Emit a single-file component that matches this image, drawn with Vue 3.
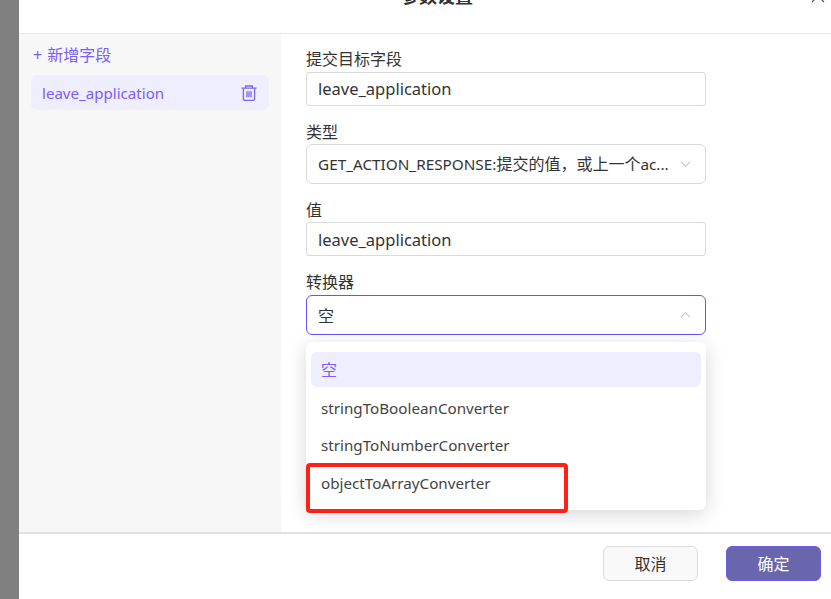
<script setup>
const options = [
  { label: '空', active: true },
  { label: 'stringToBooleanConverter' },
  { label: 'stringToNumberConverter' },
  { label: 'objectToArrayConverter' }
]
</script>

<template>
  <div class="page">
    <div class="dialog">
      <header class="head">
        <span class="title">参数设置</span>
        <svg class="close" viewBox="0 0 16 16" fill="none" stroke="#555" stroke-width="1.2">
          <path d="M2 2l12 12M14 2L2 14" />
        </svg>
      </header>
      <main class="body">
        <aside class="side">
          <div class="add"><span class="plus">+</span>新增字段</div>
          <div class="field">
            <span>leave_application</span>
            <svg class="trash" viewBox="0 0 16 16" fill="none" stroke="#7c66f5" stroke-width="1.3">
              <path d="M0.5 3.2h15M4.6 3.2V1h6.8v2.2M2.4 3.2v11.2l1 1h9.2l1-1V3.2M6 6.2v6M8 6.2v6M10 6.2v6" />
            </svg>
          </div>
        </aside>
        <section class="form">
          <label class="lab lab1">提交目标字段</label>
          <div class="ctl input">leave_application</div>
          <label class="lab lab2">类型</label>
          <div class="ctl select type">
            <span class="val"><span class="latin">GET_ACTION_RESPONSE:</span>提交的值，或上一个<span class="latin">ac...</span></span>
            <svg class="chev" viewBox="0 0 12 8" fill="none" stroke="#c4c4c4" stroke-width="1.1"><path d="M1 1.5l5 5 5-5" /></svg>
          </div>
          <label class="lab lab3">值</label>
          <div class="ctl input second">leave_application</div>
          <label class="lab lab4">转换器</label>
          <div class="ctl select focus">
            <span class="val">空</span>
            <svg class="chev" viewBox="0 0 12 8" fill="none" stroke="#c4c4c4" stroke-width="1.1"><path d="M1 6.5l5-5 5 5" /></svg>
          </div>
          <div class="menu">
            <div v-for="o in options" :key="o.label" class="opt" :class="{ on: o.active }">{{ o.label }}</div>
            <div class="mark"></div>
          </div>
        </section>
      </main>
      <footer class="foot">
        <button class="btn cancel">取消</button>
        <button class="btn ok">确定</button>
      </footer>
    </div>
  </div>
</template>

<style>
html, body { margin: 0; padding: 0; overflow: hidden; }
</style>

<style scoped>
.page {
  width: 831px;
  height: 599px;
  background: #808080;
  padding-left: 19px;
  box-sizing: border-box;
  overflow: hidden;
  font-family: "Noto Sans", "Noto Sans CJK SC", sans-serif;
  font-size: 16px;
  color: #333;
}
.dialog {
  width: 812px;
  height: 599px;
  background: #fff;
  display: flex;
  flex-direction: column;
}
.head {
  height: 33px;
  flex: none;
  border-bottom: 1px solid #e8e8e8;
  position: relative;
  overflow: hidden;
}
.title {
  position: absolute;
  left: 382px;
  top: -16px;
  font-size: 18px;
  font-weight: 700;
  line-height: 24px;
}
.close {
  position: absolute;
  left: 791px;
  top: -12px;
  width: 16px;
  height: 16px;
}
.body {
  flex: 1;
  display: flex;
  min-height: 0;
}
.side {
  width: 262px;
  flex: none;
  background: #f7f7f7;
  padding: 11px 12px 0;
  box-sizing: border-box;
}
.add {
  height: 20px;
  line-height: 20px;
  margin-left: 2px;
  color: #7c5cfc;
  font-size: 16px;
}
.plus { margin-right: 5px; }
.field {
  margin-top: 10px;
  height: 35px;
  width: 238px;
  border-radius: 6px;
  background: #eeeeff;
  color: #7c5cfc;
  display: flex;
  align-items: center;
  justify-content: space-between;
  padding: 0 12px 0 11px;
  box-sizing: border-box;
  font-size: 15.1px;
}
.trash { width: 16px; height: 16px; }
.form {
  flex: 1;
  position: relative;
  padding: 14px 0 0 25px;
}
.lab {
  display: block;
  font-size: 16px;
  line-height: 23px;
  color: #333;
}
.lab2 { margin-top: 15px; }
.lab3 { margin-top: 15px; }
.lab4 { margin-top: 15px; }
.ctl {
  width: 400px;
  box-sizing: border-box;
  border: 1px solid #d9d9d9;
  background: #fff;
  color: #333;
  padding: 0 11px;
  font-size: 16.5px;
  display: flex;
  align-items: center;
}
.input { height: 34px; margin-top: 1px; padding-bottom: 2px; border-radius: 3px; }
.input.second { margin-top: 0; padding-bottom: 0; }
.select { height: 40px; border-radius: 6px; justify-content: space-between; }
.select .val { font-size: 16px; white-space: nowrap; line-height: 38px; }
.latin { font-size: 15.3px; }
.focus { border-color: #6a50ff; margin-top: 1px; }
.focus .val { padding-top: 2px; }
.chev { width: 11px; height: 8px; margin-right: 3px; }
.menu {
  position: absolute;
  left: 25px;
  top: 308px;
  width: 400px;
  height: 168px;
  background: #fff;
  border-radius: 6px;
  box-shadow: 0 4px 20px rgba(0, 0, 0, 0.16);
  padding: 10px 5px 0;
  box-sizing: border-box;
}
.opt {
  height: 35px;
  line-height: 37px;
  padding: 0 10px;
  margin-bottom: 2.5px;
  border-radius: 6px;
  font-size: 15.2px;
  color: #444;
}
.opt.on { background: #eeeeff; color: #7c5cfc; font-size: 16px; }
.mark {
  position: absolute;
  left: 0;
  top: 121px;
  width: 262px;
  height: 50px;
  border: 4px solid #ff2116;
  border-radius: 4px;
  box-sizing: border-box;
}
.foot {
  height: 67px;
  flex: none;
  border-top: 2px solid #e2e2e2;
  box-sizing: border-box;
  display: flex;
  justify-content: flex-end;
  align-items: flex-start;
  gap: 28px;
  padding: 12px 10px 0 0;
}
.btn {
  width: 95px;
  height: 35px;
  padding: 0 0 2px 0;
  border-radius: 6px;
  font-family: "Noto Sans CJK SC", sans-serif;
  font-size: 16px;
}
.cancel { background: #f9f9f9; border: 1px solid #dcdcdc; color: #333; }
.ok { background: #6a66ae; border: 1px solid #6a5de0; color: #fff; }
</style>
